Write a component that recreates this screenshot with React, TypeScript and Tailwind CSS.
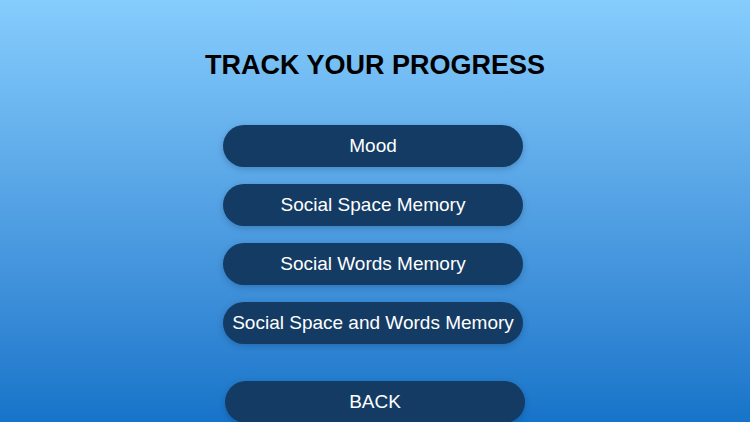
const items = ["Mood", "Social Space Memory", "Social Words Memory", "Social Space and Words Memory"];

export default function App() {
  return (
    <div
      className="w-[750px] h-[422px] overflow-hidden bg-gradient-to-b from-[#86cdfd] to-[#1574c9] flex flex-col items-center"
      style={{ fontFamily: '"Liberation Sans", Arial, sans-serif' }}
    >
      <h1 className="mt-[49px] text-[27px] leading-[32px] font-bold text-black">TRACK YOUR PROGRESS</h1>
      <div className="mt-[44px] mr-[4px] flex flex-col gap-[17px]">
        {items.map((label) => (
          <button
            key={label}
            className="w-[300px] h-[42px] rounded-full bg-[#143b64] text-white text-[19px] shadow-[0_2px_6px_rgba(0,30,70,0.25)]"
          >
            {label}
          </button>
        ))}
      </div>
      <button className="mt-[37px] w-[300px] h-[42px] shrink-0 rounded-full bg-[#143b64] text-white text-[19px] shadow-[0_2px_6px_rgba(0,30,70,0.25)]">
        BACK
      </button>
    </div>
  );
}
